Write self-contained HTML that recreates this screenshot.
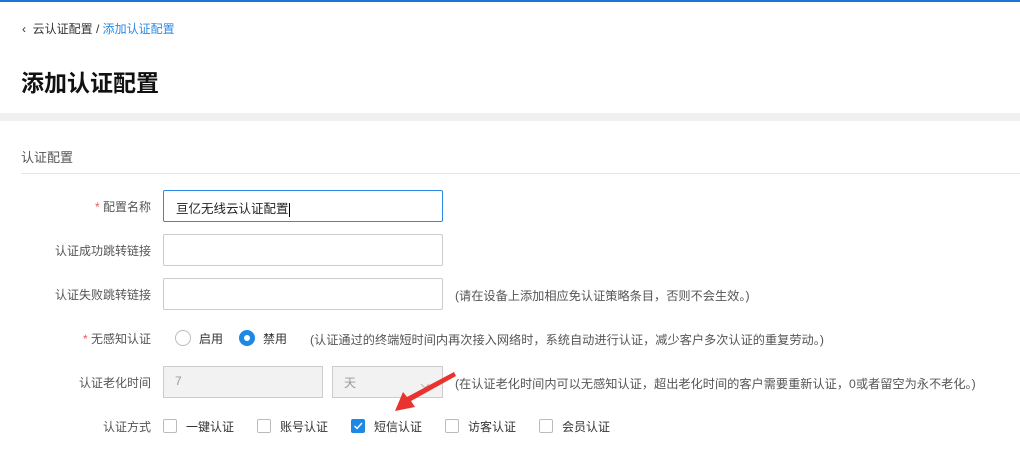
<!DOCTYPE html>
<html><head><meta charset="utf-8"><style>
*{margin:0;padding:0;box-sizing:border-box}
body{width:1020px;height:453px;background:#fff;font-family:"Liberation Sans","Noto Sans CJK SC",sans-serif;font-size:12px;color:#333;position:relative;overflow:hidden}
.a{position:absolute;white-space:nowrap}
.lbl{position:absolute;right:869px;font-size:12px;color:#555;white-space:nowrap}
.in{position:absolute;left:163px;width:280px;height:32px;border:1px solid #ccc;border-radius:2px}
.hint{position:absolute;font-size:12.2px;color:#555;white-space:nowrap}
.cb{position:absolute;width:14px;height:14px;border:1px solid #bbb;border-radius:2px;top:419px}
.ct{position:absolute;top:418px;font-size:12px;color:#333}
</style></head><body>
<div class="a" style="left:0;top:0;width:1020px;height:2px;background:#1e74d6"></div>
<div class="a" style="left:22px;top:20px;font-size:12px;color:#333">‹&nbsp;&nbsp;云认证配置 / <span style="color:#2a8ae6">添加认证配置</span></div>
<div class="a" style="left:21px;top:64px;font-size:23px;font-weight:bold;color:#111">添加认证配置</div>
<div class="a" style="left:0;top:113px;width:1020px;height:8px;background:#f0f0f0"></div>
<div class="a" style="left:21px;top:147px;font-size:13px;color:#555">认证配置</div>
<div class="a" style="left:21px;top:173px;width:999px;height:1px;background:#e5e5e5"></div>

<div class="lbl" style="top:198px"><span style="color:#e55">*</span> 配置名称</div>
<div class="in" style="top:190px;border-color:#2a8ae6;padding:7px 0 0 12px;font-size:12.5px;color:#222">亘亿无线云认证配置<span style="display:inline-block;width:1px;height:14px;background:#000;vertical-align:middle"></span></div>
<div class="lbl" style="top:242px">认证成功跳转链接</div>
<div class="in" style="top:234px"></div>
<div class="lbl" style="top:286px">认证失败跳转链接</div>
<div class="in" style="top:278px"></div>
<div class="hint" style="left:455px;top:286px">(请在设备上添加相应免认证策略条目，否则不会生效。)</div>

<div class="lbl" style="top:330px"><span style="color:#e55">*</span> 无感知认证</div>
<div class="a" style="left:175px;top:330px;width:16px;height:16px;border:1px solid #bbb;border-radius:50%"></div>
<div class="a" style="left:199px;top:330px">启用</div>
<div class="a" style="left:239px;top:330px;width:16px;height:16px;border-radius:50%;background:#1e88e5"><div style="position:absolute;left:5px;top:5px;width:6px;height:6px;border-radius:50%;background:#fff"></div></div>
<div class="a" style="left:263px;top:330px">禁用</div>
<div class="hint" style="left:310px;top:330px">(认证通过的终端短时间内再次接入网络时，系统自动进行认证，减少客户多次认证的重复劳动。)</div>

<div class="lbl" style="top:374px">认证老化时间</div>
<div class="a" style="left:163px;top:366px;width:160px;height:32px;border:1px solid #ccc;background:#f2f2f2;padding:7px 0 0 11px;color:#999">7</div>
<div class="a" style="left:332px;top:366px;width:111px;height:32px;border:1px solid #ccc;background:#f2f2f2;padding:7px 0 0 11px;color:#999">天<svg width="10" height="6" style="position:absolute;right:12px;top:16px"><path d="M1 1 L5 5 L9 1" stroke="#bbb" stroke-width="1.2" fill="none"/></svg></div>
<div class="hint" style="left:455px;top:374px">(在认证老化时间内可以无感知认证，超出老化时间的客户需要重新认证，0或者留空为永不老化。)</div>

<div class="lbl" style="top:418px">认证方式</div>
<div class="cb" style="left:163px"></div><div class="ct" style="left:186px">一键认证</div>
<div class="cb" style="left:257px"></div><div class="ct" style="left:280px">账号认证</div>
<div class="cb" style="left:351px;background:#1e88e5;border-color:#1e88e5"><svg width="12" height="12" style="position:absolute;left:0;top:0"><path d="M2.5 6 L5 8.5 L10 3" stroke="#fff" stroke-width="1.4" fill="none"/></svg></div><div class="ct" style="left:374px">短信认证</div>
<div class="cb" style="left:445px"></div><div class="ct" style="left:468px">访客认证</div>
<div class="cb" style="left:539px"></div><div class="ct" style="left:562px">会员认证</div>

<svg class="a" style="left:0;top:0" width="1020" height="453"><path d="M454 372 L456 376 L411 401 L415 407 L395 411 L403 392 L407 397 Z" fill="#e8332f"/></svg>
</body></html>
